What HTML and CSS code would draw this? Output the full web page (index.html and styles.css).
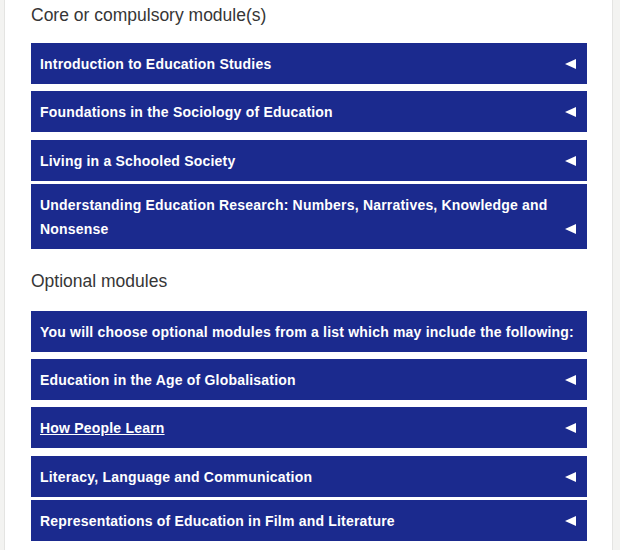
FILE: index.html
```html
<!DOCTYPE html>
<html>
<head>
<meta charset="utf-8">
<link rel="stylesheet" href="styles.css">
</head>
<body>
<div class="page">
  <div class="panel">
    <h2 class="heading">Core or compulsory module(s)</h2>
    <div class="modules">
      <div class="module"><span class="title">Introduction to Education Studies</span><span class="arrow"></span></div>
      <div class="module"><span class="title">Foundations in the Sociology of Education</span><span class="arrow"></span></div>
      <div class="module gap8"><span class="title">Living in a Schooled Society</span><span class="arrow"></span></div>
      <div class="module tight"><span class="title">Understanding Education Research: Numbers, Narratives, Knowledge and Nonsense</span><span class="arrow"></span></div>
    </div>
    <h2 class="heading second">Optional modules</h2>
    <div class="modules">
      <div class="module full"><span class="title">You will choose optional modules from a list which may include the following:</span></div>
      <div class="module"><span class="title">Education in the Age of Globalisation</span><span class="arrow"></span></div>
      <div class="module"><span class="title"><a class="link" href="#">How People Learn</a></span><span class="arrow"></span></div>
      <div class="module gap8"><span class="title">Literacy, Language and Communication</span><span class="arrow"></span></div>
      <div class="module tight"><span class="title">Representations of Education in Film and Literature</span><span class="arrow"></span></div>
    </div>
  </div>
</div>
</body>
</html>
```

FILE: styles.css
```css
html, body {
  margin: 0;
  padding: 0;
  background: #f3f3f1;
}
.page {
  width: 620px;
  height: 550px;
  overflow: hidden;
  background: #f3f3f1;
}
.panel {
  margin-left: 4px;
  width: 556px;
  min-height: 550px;
  background: #ffffff;
  border-left: 1px solid #e4e4e2;
  border-right: 1px solid #e4e4e2;
  padding: 5px 25px 0 26px;
  font-family: "Liberation Sans", Arial, sans-serif;
}
.heading {
  margin: 0 0 18px 0;
  font-size: 17.5px;
  line-height: 20px;
  font-weight: normal;
  color: #363636;
}
.heading.second {
  margin-top: 22px;
  margin-bottom: 20px;
}
.modules {
  display: flex;
  flex-direction: column;
}
.module {
  display: flex;
  align-items: flex-end;
  background: #1b2a8e;
  color: #ffffff;
  padding: 9px 11px 8px 9px;
  font-size: 14px;
  font-weight: bold;
  line-height: 24px;
  letter-spacing: 0.2px;
}
.module + .module {
  margin-top: 7px;
}
.module.gap8 {
  margin-top: 8px;
}
.module.tight {
  margin-top: 3px;
}
.title {
  flex: 1;
  padding-right: 12px;
}
.module.full .title {
  padding-right: 0;
  white-space: nowrap;
}
.link {
  color: #ffffff;
  text-decoration: underline;
}
.arrow {
  flex: none;
  width: 0;
  height: 0;
  margin-bottom: 7px;
  border-top: 5px solid transparent;
  border-bottom: 5px solid transparent;
  border-right: 11px solid #ffffff;
}
```
